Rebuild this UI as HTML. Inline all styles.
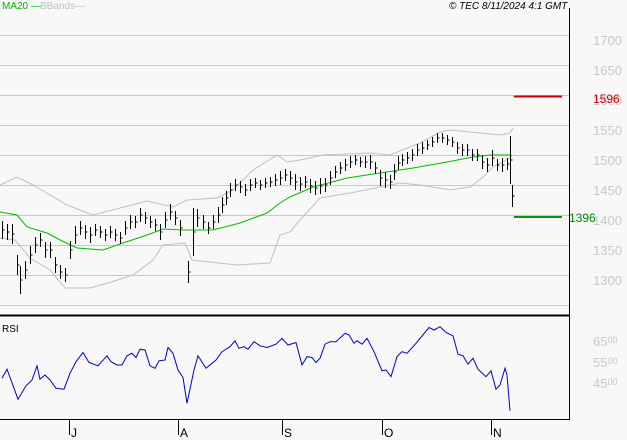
<!DOCTYPE html>
<html><head><meta charset="utf-8"><style>
html,body{margin:0;padding:0;background:#f8f8f8;width:627px;height:440px;overflow:hidden}
svg{display:block;font-family:"Liberation Sans",sans-serif}
</style></head><body>
<svg width="627" height="440" viewBox="0 0 627 440" xmlns="http://www.w3.org/2000/svg">
<rect width="627" height="440" fill="#f8f8f8"/>
<g stroke="#c8c8c8" stroke-width="1" shape-rendering="crispEdges">
<line x1="0" y1="35.5" x2="569" y2="35.5"/><line x1="0" y1="65.5" x2="569" y2="65.5"/>
<line x1="0" y1="95.5" x2="569" y2="95.5"/><line x1="0" y1="125.5" x2="569" y2="125.5"/>
<line x1="0" y1="155.5" x2="569" y2="155.5"/><line x1="0" y1="185.5" x2="569" y2="185.5"/>
<line x1="0" y1="215.5" x2="569" y2="215.5"/><line x1="0" y1="245.5" x2="569" y2="245.5"/>
<line x1="0" y1="275.5" x2="569" y2="275.5"/><line x1="0" y1="305.5" x2="569" y2="305.5"/>
</g>
<g fill="#c8c8c8" font-size="13">
<text x="593" y="45">1700</text><text x="593" y="75">1650</text>
<text x="593" y="135">1550</text><text x="593" y="165">1500</text><text x="593" y="195">1450</text>
<text x="593" y="255">1350</text><text x="593" y="285">1300</text>
<text x="593" y="225">1400</text>
<text x="593" y="105">1600</text>
<text x="593" y="346">65<tspan font-size="9" dy="-3">00</tspan></text>
<text x="593" y="367">55<tspan font-size="9" dy="-3">00</tspan></text>
<text x="593" y="388">45<tspan font-size="9" dy="-3">00</tspan></text>
</g>
<text x="593" y="103" fill="#cc0000" font-size="12">1596</text>
<text x="569" y="222" fill="#008800" font-size="12">1396</text>
<line x1="514" y1="96.5" x2="562" y2="96.5" stroke="#cc0000" stroke-width="2"/>
<line x1="514" y1="217" x2="562" y2="217" stroke="#009900" stroke-width="2"/>
<polyline fill="none" stroke="#c0c0c0" stroke-width="1" points="0,185 17,177 33,185 67,205 93,215 120,208 147,201 173,207 187,200 217,198 233,190 253,170 277,155 287,162 300,160 323,155 370,153 390,155 420,143 440,132 450,130 480,133 500,135 510,133 513,128"/>
<polyline fill="none" stroke="#c0c0c0" stroke-width="1" points="0,238 15,240 30,258 50,270 65,288 90,288 108,283 133,275 153,260 163,245 185,243 192,260 237,265 270,263 280,235 290,232 300,220 320,198 350,193 400,183 420,185 450,190 470,187 483,177 493,167 510,158"/>
<polyline fill="none" stroke="#00bb00" stroke-width="1" points="0,212 17,215 27,227 47,233 60,240 77,248 103,250 123,243 147,235 163,229 183,230 213,230 240,223 267,213 280,203 290,197 313,187 347,178 380,173 413,168 447,162 473,157 490,155 510,155 512,156"/>
<path id="bars" fill="none" stroke="#000" stroke-width="1" d=""/>
<line x1="569.5" y1="8" x2="569.5" y2="420" stroke="#000" stroke-width="1"/>
<line x1="0" y1="315.5" x2="569" y2="315.5" stroke="#000" stroke-width="2"/>
<line x1="0" y1="419.5" x2="569" y2="419.5" stroke="#000" stroke-width="1"/>
<g stroke="#000" stroke-width="1">
<line x1="69.5" y1="419" x2="69.5" y2="435"/><line x1="178.5" y1="419" x2="178.5" y2="435"/>
<line x1="282.5" y1="419" x2="282.5" y2="435"/><line x1="382.5" y1="419" x2="382.5" y2="435"/>
<line x1="491.5" y1="419" x2="491.5" y2="435"/>
</g>
<g font-size="12" fill="#000">
<text x="71" y="437">J</text><text x="180" y="437">A</text><text x="284" y="437">S</text><text x="384" y="437">O</text><text x="493" y="437">N</text>
<text x="2" y="332" font-size="10">RSI</text>
</g>
<polyline fill="none" stroke="#0000cc" stroke-width="1" points="2,378.3 7,369.2 18,399.2 26,385.8 32,380 37,365.8 40,379.2 45,375 50,380 56,388.3 64,389.2 70,373.3 76,361.7 83,352.5 89,362.5 98,365.8 107,355.8 111,361.7 117,365 122,365 127,355.8 132,353.3 136,357.5 140,349.2 145,350 150,365.8 155,368.3 159,360.8 165,360 168,347.5 173,353.3 178,370 183,377.5 187,403.3 194,370 198,355.8 206,368.3 216,360 222,351.7 230,346.7 235,340.8 239,348.3 244,346.7 248,349.2 254,341.7 260,345.8 267,347.5 276,344.2 282,338.3 288,345 296,342.5 302,365 307,356.7 312,357.5 316,362.5 320,358.3 325,344.2 330,341.7 336,341.7 345,333.3 349,335 354,343.3 357,340.8 362,344.2 367,338.3 374,351.7 382,370.8 386,370 391,376.7 397,356.7 402,351.7 407,353.3 416,343.3 429,327.5 434,330 440,326.7 446,332.5 453,335.8 458,354.2 463,355.8 468,364.2 473,358.3 478,369.2 486,376.7 491,370.8 496,389.2 500,385 505,368.3 507,375 510,410.8"/>
<text x="2" y="9" fill="#00bb00" font-size="10">MA20 —</text>
<text x="40" y="9" fill="#c0c0c0" font-size="10">BBands—</text>
<text x="449" y="9" fill="#000" font-size="10" font-style="italic">© TEC 8/11/2024 4:1 GMT</text>
</svg>
<script>
var c=[[2,230,9],[7,232,8],[12,234,10],[17,265,10],[20,280,14],[25,270,9],[30,255,9],[35,245,8],[40,240,7],[45,250,8],[50,250,8],[55,265,8],[60,272,7],[65,275,7],[70,250,9],[75,235,9],[80,228,7],[85,232,7],[90,235,8],[95,230,6],[100,232,6],[105,235,6],[110,232,6],[115,235,6],[120,238,6],[125,228,7],[130,222,7],[135,222,6],[140,215,7],[145,218,6],[150,222,6],[155,225,6],[160,232,8],[165,220,8],[170,212,8],[175,218,7],[180,228,8],[188,272,11],[193,232,24],[197,218,9],[203,222,7],[208,228,6],[213,222,7],[218,215,8],[222,205,8],[226,198,7],[230,190,7],[235,185,6],[240,187,6],[245,190,6],[250,185,6],[255,183,5],[260,185,5],[265,183,5],[270,182,5],[275,180,6],[280,178,7],[285,175,6],[290,178,7],[295,182,8],[300,184,7],[305,182,6],[310,186,7],[315,188,7],[320,186,8],[325,185,7],[330,178,7],[335,172,6],[340,168,6],[345,165,6],[350,162,6],[355,160,5],[360,162,5],[365,162,6],[370,162,7],[375,168,6],[380,178,8],[385,180,8],[390,182,7],[394,172,8],[398,163,7],[402,160,6],[407,158,6],[412,155,6],[417,150,6],[422,148,6],[427,145,5],[432,142,5],[437,138,5],[442,138,5],[447,140,5],[452,142,5],[457,148,6],[462,150,6],[467,150,6],[472,155,6],[477,155,6],[482,162,7],[487,165,7],[492,158,8],[497,165,6],[502,165,7],[507,164,6],[510,160,24],[512,196,11]];
var d="";c.forEach(function(b){var x=b[0]+0.5;d+="M"+x+" "+(b[1]-b[2])+"V"+(b[1]+b[2])+"M"+x+" "+b[1]+"h2";});
document.getElementById("bars").setAttribute("d",d);
</script>
</body></html>
